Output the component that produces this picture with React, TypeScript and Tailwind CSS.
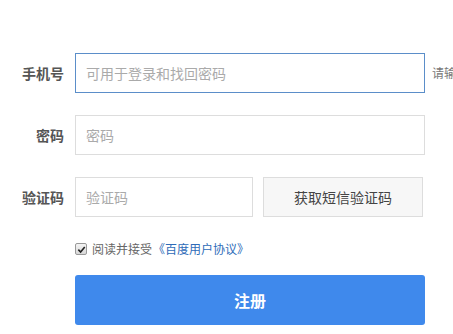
import React from 'react';

const font = { fontFamily: '"Noto Sans CJK SC", "Noto Sans", sans-serif' };

const Label: React.FC<{ text: string }> = ({ text }) => (
    <label className="w-[64px] shrink-0 text-right text-[14px] font-bold text-[#555] mr-[11px]">{text}</label>
);

export default function App() {
    return (
        <div className="w-[453px] h-[334px] overflow-hidden bg-white pt-[53px]" style={font}>
            <div className="flex items-center">
                <Label text="手机号" />
                <input
                    className="h-[40px] w-[350px] shrink-0 border border-[#5b8ec9] px-[10px] text-[14px] text-[#333] outline-none placeholder:text-[#aaa]"
                    placeholder="可用于登录和找回密码"
                />
                <span className="ml-[7px] whitespace-nowrap text-[12px] text-[#777]">请输入中国大陆手机号，其他用户不可见</span>
            </div>

            <div className="mt-[22px] flex items-center">
                <Label text="密码" />
                <input
                    className="h-[40px] w-[350px] shrink-0 border border-[#ddd] px-[10px] text-[14px] text-[#333] outline-none placeholder:text-[#aaa]"
                    placeholder="密码"
                />
            </div>

            <div className="mt-[22px] flex items-center">
                <Label text="验证码" />
                <input
                    className="h-[40px] w-[178px] shrink-0 border border-[#ddd] px-[10px] text-[14px] text-[#333] outline-none placeholder:text-[#aaa]"
                    placeholder="验证码"
                />
                <button className="ml-[10px] h-[40px] w-[160px] shrink-0 border border-[#ddd] bg-[#f7f7f7] text-[14px] font-normal text-[#444]">
                    获取短信验证码
                </button>
            </div>

            <div className="mt-[23px] ml-[75px] flex items-center text-[12px] text-[#666]">
                <span className="flex h-[12px] w-[12px] items-center justify-center rounded-[2px] border border-[#999] bg-gradient-to-b from-[#f4f4f4] to-[#d8d8d8]">
                    <svg viewBox="0 0 10 10" className="h-[9px] w-[9px]">
                        <path d="M1.5 5.2 L4 7.8 L8.6 2.2" fill="none" stroke="#222" strokeWidth="1.8" />
                    </svg>
                </span>
                <span className="ml-[5px]">阅读并接受</span>
                <a className="ml-[1px] text-[#2e6bb8]">《百度用户协议》</a>
            </div>

            <button className="mt-[17px] ml-[75px] flex h-[50px] w-[350px] items-center justify-center rounded-[3px] bg-[#3f89ec] text-[16px] font-bold text-white">
                注册
            </button>
        </div>
    );
}
